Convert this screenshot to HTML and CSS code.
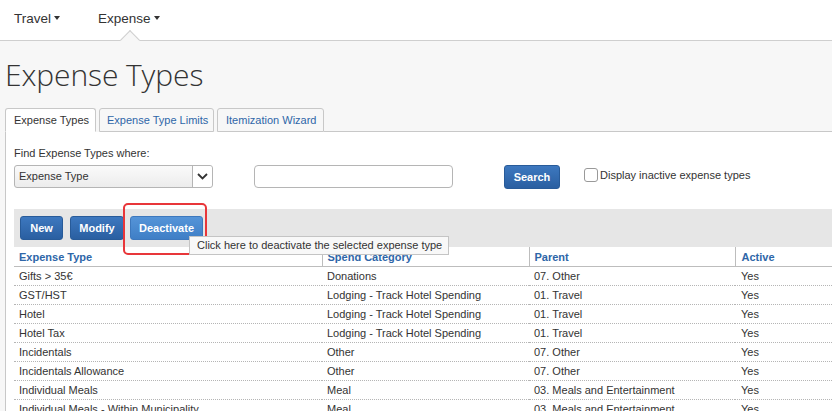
FILE: index.html
```html
<!DOCTYPE html>
<html>
<head>
<meta charset="utf-8">
<link rel="stylesheet" href="styles.css">
</head>
<body>
<header class="topnav">
  <div class="nav-item">Travel<span class="caret"></span></div>
  <div class="nav-item active">Expense<span class="caret"></span><span class="notch"></span></div>
</header>
<main class="page">
  <h1 class="title">Expense Types</h1>
  <div class="tabs">
    <div class="tab current">Expense Types</div>
    <div class="tab">Expense Type Limits</div>
    <div class="tab">Itemization Wizard</div>
    <div class="tab-rest"></div>
  </div>
  <section class="panel">
    <div class="find-label">Find Expense Types where:</div>
    <div class="find-row">
      <div class="select">
        <span class="select-text">Expense Type</span>
        <span class="select-btn"><svg width="11" height="7" viewBox="0 0 11 7"><path d="M1 1l4.5 4.5L10 1" fill="none" stroke="#333" stroke-width="1.8"/></svg></span>
      </div>
      <div class="text-input"></div>
      <button class="btn search">Search</button>
      <label class="check"><span class="box"></span>Display inactive expense types</label>
    </div>
    <div class="grid-wrap">
      <div class="toolbar">
        <button class="btn">New</button>
        <button class="btn">Modify</button>
        <button class="btn hover">Deactivate</button>
        <span class="highlight"></span>
        <span class="tooltip">Click here to deactivate the selected expense type</span>
      </div>
      <table class="grid">
        <colgroup><col class="c1"><col class="c2"><col class="c3"><col class="c4"></colgroup>
        <thead>
          <tr><th>Expense Type</th><th>Spend Category</th><th>Parent</th><th>Active</th></tr>
        </thead>
        <tbody>
          <tr><td>Gifts &gt; 35€</td><td>Donations</td><td>07. Other</td><td>Yes</td></tr>
          <tr><td>GST/HST</td><td>Lodging - Track Hotel Spending</td><td>01. Travel</td><td>Yes</td></tr>
          <tr><td>Hotel</td><td>Lodging - Track Hotel Spending</td><td>01. Travel</td><td>Yes</td></tr>
          <tr><td>Hotel Tax</td><td>Lodging - Track Hotel Spending</td><td>01. Travel</td><td>Yes</td></tr>
          <tr><td>Incidentals</td><td>Other</td><td>07. Other</td><td>Yes</td></tr>
          <tr><td>Incidentals Allowance</td><td>Other</td><td>07. Other</td><td>Yes</td></tr>
          <tr><td>Individual Meals</td><td>Meal</td><td>03. Meals and Entertainment</td><td>Yes</td></tr>
          <tr><td>Individual Meals - Within Municipality</td><td>Meal</td><td>03. Meals and Entertainment</td><td>Yes</td></tr>
        </tbody>
      </table>
    </div>
  </section>
</main>
</body>
</html>
```
FILE: styles.css
```css
* { box-sizing: border-box; }
html, body { margin: 0; padding: 0; }
body {
  background: #f7f7f7;
  font-family: "Liberation Sans", Arial, sans-serif;
  font-size: 11px;
  color: #333;
  overflow: hidden;
  width: 832px;
  height: 411px;
}
.topnav {
  height: 41px;
  background: #fff;
  border-bottom: 1px solid #cfcfcf;
  display: flex;
  align-items: flex-start;
  padding-left: 14px;
  gap: 38px;
}
.nav-item {
  position: relative;
  font-size: 13.5px;
  color: #333;
  padding-top: 10px;
  line-height: 17px;
}
.caret {
  display: inline-block;
  width: 0; height: 0;
  border-left: 3.5px solid transparent;
  border-right: 3.5px solid transparent;
  border-top: 4px solid #333;
  margin-left: 3px;
  vertical-align: 3px;
}
.notch {
  position: absolute;
  left: 25px;
  top: 33px;
  width: 14px;
  height: 14px;
  background: #f7f7f7;
  border-left: 1px solid #cfcfcf;
  border-top: 1px solid #cfcfcf;
  transform: rotate(45deg);
}
.page {
  padding-left: 5px;
  width: 960px;
}
.title {
  margin: 0;
  padding-top: 14px;
  font-family: "Open Sans", sans-serif;
  font-weight: 300;
  font-size: 30px;
  line-height: 40px;
  color: #333;
  letter-spacing: -0.1px;
}
.tabs {
  margin-top: 13px;
  display: flex;
  align-items: flex-end;
  height: 24px;
}
.tab {
  height: 24px;
  line-height: 23px;
  padding: 0 8px;
  border: 1px solid #c8c8c8;
  border-radius: 3px 3px 0 0;
  background: #f7f7f7;
  color: #2e66a8;
  margin-right: 3px;
  white-space: nowrap;
}
.tab.current {
  background: #fff;
  color: #333;
  border-bottom-color: #fff;
  width: 91px;
}
.tab:nth-child(2) { width: 115px; padding-left: 7px; }
.tab:nth-child(3) { width: 107px; }
.tab-rest {
  flex: 1;
  border-bottom: 1px solid #c8c8c8;
  height: 24px;
  margin-left: -3px;
}
.panel {
  background: #fff;
  border-left: 1px solid #c8c8c8;
  padding-left: 8px;
  height: 300px;
}
.find-label {
  padding-top: 14px;
  line-height: 15px;
}
.find-row {
  margin-top: 3px;
  display: flex;
  align-items: center;
  height: 24px;
}
.select {
  width: 199px;
  height: 23px;
  border: 1px solid #b5b5b5;
  border-radius: 3px;
  background: linear-gradient(#fafafa, #ececec);
  display: flex;
  align-items: center;
}
.select-text {
  flex: 1;
  padding-left: 4px;
}
.select-btn {
  width: 20px;
  height: 21px;
  border-left: 1px solid #b5b5b5;
  background: #fff;
  border-radius: 0 3px 3px 0;
  display: flex;
  align-items: center;
  justify-content: center;
}
.text-input {
  margin-left: 41px;
  width: 199px;
  height: 23px;
  border: 1px solid #b5b5b5;
  border-radius: 4px;
  background: #fff;
}
.btn {
  font-family: "Liberation Sans", Arial, sans-serif;
  font-size: 11px;
  font-weight: bold;
  color: #fff;
  border: 1px solid #285b99;
  border-radius: 3px;
  background: linear-gradient(#3d78bf, #2a5fa1);
  height: 24px;
  padding: 0 10px;
  cursor: pointer;
}
.btn.search {
  margin-left: 51px;
  margin-top: 2px;
  width: 56px;
  padding: 0;
}
.check {
  margin-left: 24px;
  display: flex;
  align-items: center;
  margin-top: -2px;
}
.box {
  width: 14px;
  height: 14px;
  border: 1px solid #999;
  border-radius: 3px;
  background: #fff;
  margin-right: 2px;
}
.grid-wrap {
  margin-top: 21px;
}
.toolbar {
  position: relative;
  background: #e6e6e6;
  height: 38px;
  display: flex;
  align-items: center;
  padding-left: 6px;
  gap: 7px;
}
.toolbar .btn:nth-child(1) { width: 43px; padding: 0; }
.toolbar .btn:nth-child(2) { width: 54px; padding: 0; }
.toolbar .btn.hover {
  width: 73px;
  padding: 0;
  margin-left: -1px;
  background: linear-gradient(#5594d8, #3f7fc6);
  border-color: #3d78bd;
}
.highlight {
  position: absolute;
  left: 109px;
  top: -6px;
  width: 84px;
  height: 52px;
  border: 2px solid #e8363a;
  border-radius: 5px;
}
.tooltip {
  position: absolute;
  left: 175px;
  top: 27px;
  height: 19px;
  line-height: 17px;
  padding: 0 6px 0 7px;
  background: #f8f8f8;
  border: 1px solid #c4c4c4;
  color: #333;
  white-space: nowrap;
  z-index: 2;
}
.grid {
  border-collapse: collapse;
  table-layout: fixed;
  width: 860px;
}
.c1 { width: 308px; }
.c2 { width: 207px; }
.c3 { width: 206px; }
.c4 { width: 139px; }
.grid th {
  text-align: left;
  color: #2e66a8;
  font-weight: bold;
  height: 19px;
  padding: 2px 5px 0 5px;
  border-bottom: 1px solid #bdbdbd;
  border-left: 1px solid #bdbdbd;
}
.grid th:first-child { border-left: none; }
.grid td {
  height: 19px;
  padding: 0 5px;
  border-bottom: 1px dotted #b5b5b5;
  white-space: nowrap;
  overflow: hidden;
}
.grid td:nth-child(4), .grid th:nth-child(4) { padding-left: 6px; }
```
